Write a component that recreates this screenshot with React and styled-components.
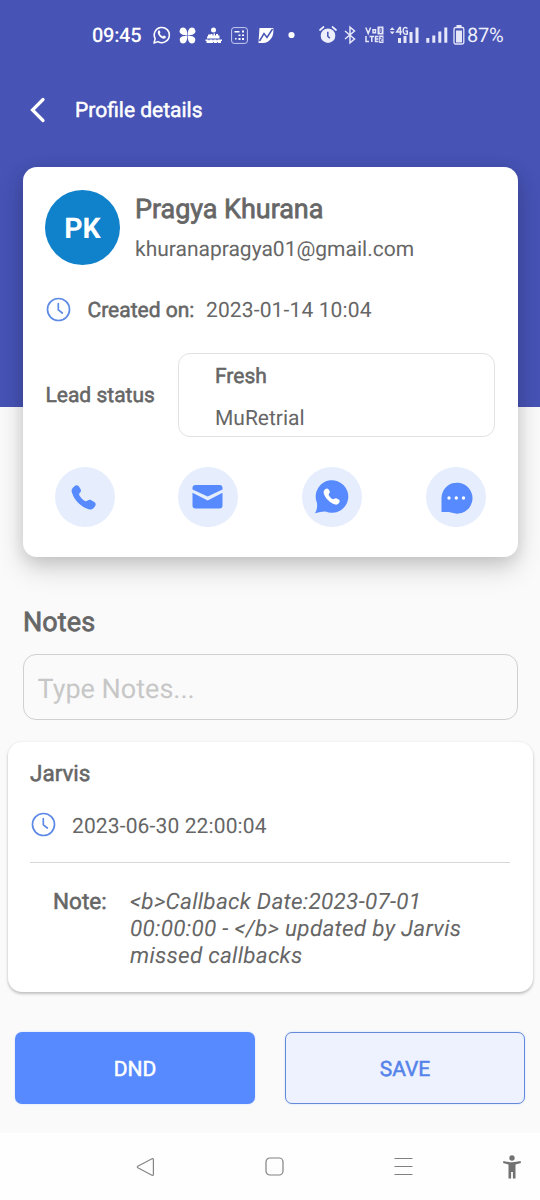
import React from 'react';
import styled, { createGlobalStyle } from 'styled-components';

const GlobalStyle = createGlobalStyle`
  * { box-sizing: border-box; }
  body {
    margin: 0;
    background: #fafafa;
    font-family: Roboto, sans-serif;
    text-rendering: geometricPrecision;
  }
`;

const Screen = styled.div`
  width: 540px;
  height: 1200px;
  display: flex;
  flex-direction: column;
  overflow: hidden;
  color: #666;
  background: linear-gradient(#4753b5 407px, #fafafa 407px);
`;

const StatusBar = styled.div`
  height: 70px;
  padding-left: 92px;
  display: flex;
  align-items: center;
  color: #fff;
  white-space: nowrap;
`;

const StatusText = styled.span`
  width: ${(p) => p.$width}px;
  margin-left: ${(p) => p.$gap || 0}px;
  font-size: 20px;
  line-height: 24px;
  font-weight: ${(p) => p.$weight || 400};
  letter-spacing: ${(p) => p.$spacing || 0}px;
  color: ${(p) => p.$color || '#fff'};
`;

const StatusIcon = styled.svg`
  flex: none;
  display: block;
  margin-left: ${(p) => p.$gap}px;
  overflow: visible;
`;

const TitleBar = styled.header`
  height: 80px;
  margin-bottom: 17px;
  padding-left: 29px;
  display: flex;
  align-items: center;
  gap: 28px;
`;

const Title = styled.h1`
  margin: 0;
  padding-top: 1px;
  font-size: 21px;
  line-height: 26px;
  font-weight: 400;
  color: #fff;
  -webkit-text-stroke: 0.5px #fff;
`;

const ProfileCard = styled.section`
  flex: none;
  width: 495px;
  height: 390px;
  margin-left: 22.5px;
  padding: 23px 23px 0 22px;
  border-radius: 14px;
  background: #fff;
  box-shadow: 0 12px 26px rgba(0, 0, 0, 0.17), 0 3px 16px rgba(0, 0, 0, 0.1);
`;

const Person = styled.div`
  display: flex;
  height: 75px;
  gap: 15.5px;
`;

const Avatar = styled.div`
  width: 75px;
  height: 75px;
  border-radius: 50%;
  background: #1081cb;
  color: #fff;
  font-size: 28.5px;
  font-weight: 700;
  display: flex;
  align-items: center;
  justify-content: center;
  padding: 2px 0 0 1px;
`;

const Name = styled.h2`
  margin: 3px 0 12px;
  font-size: 27px;
  line-height: 32px;
  letter-spacing: -0.05px;
  font-weight: 400;
  -webkit-text-stroke: 0.75px #666;
`;

const Email = styled.div`
  font-size: 21px;
  line-height: 27px;
`;

const Label = styled.span`
  font-size: ${(p) => p.$size || 21}px;
  line-height: 26px;
  -webkit-text-stroke: 0.55px #666;
`;

const Value = styled.span`
  font-size: 21px;
  line-height: 26px;
  letter-spacing: ${(p) => p.$spacing || 0}px;
`;

const CreatedRow = styled.div`
  display: flex;
  align-items: center;
  height: 26px;
  margin-top: 32px;
  padding-left: 1px;

  ${Label} { margin-left: 17px; width: 118.5px; }
  ${Label}, ${Value} { padding-top: 2px; }
`;

const StatusRow = styled.div`
  display: flex;
  align-items: center;
  justify-content: space-between;
  margin-top: 30px;
  padding-left: 1px;

  > ${Label} { padding-top: 2px; }
`;

const StatusPicker = styled.div`
  width: 317px;
  height: 84px;
  padding: 10px 36.5px;
  border: 1.5px solid #e2e2e2;
  border-radius: 12px;
  display: flex;
  flex-direction: column;
  gap: 15.5px;
`;

const Actions = styled.div`
  display: flex;
  justify-content: space-between;
  margin: 30px 8.5px 0 10px;
`;

const ActionButton = styled.button`
  width: 60px;
  height: 60px;
  padding: 0;
  border: 0;
  border-radius: 50%;
  background: #e6edfd;
  svg { display: block; }
`;

const NotesHeading = styled.h2`
  margin: 49px 0 0 23px;
  font-size: 27px;
  line-height: 32px;
  letter-spacing: 0.1px;
  font-weight: 400;
  -webkit-text-stroke: 0.75px #666;
`;

const NotesInput = styled.input`
  flex: none;
  width: 495px;
  height: 66px;
  margin: 16px 0 22px 22.5px;
  padding: 3px 14px 0;
  border: 1.5px solid #d0d0d0;
  border-radius: 13px;
  background: transparent;
  font: 27px Roboto, sans-serif;
  text-rendering: inherit;
  &::placeholder { color: #c7c7c7; opacity: 1; }
`;

const NoteCard = styled.article`
  flex: none;
  width: 525px;
  height: 250px;
  margin-left: 7.5px;
  padding: 19px 22.5px 0;
  border-radius: 14px;
  background: #fff;
  box-shadow: 0 2px 3px rgba(0, 0, 0, 0.22), 0 0 3px rgba(0, 0, 0, 0.07);
`;

const Author = styled.div`
  height: 26px;
  display: flex;
`;

const NoteDate = styled.div`
  display: flex;
  align-items: center;
  gap: 16px;
  padding-left: 1px;
  height: 26px;
  margin-top: 25px;

  ${Value} { padding-top: 3px; }
`;

const Divider = styled.hr`
  height: 1px;
  margin: 24px 0 26px;
  border: 0;
  background: #d8d8d8;
`;

const NoteBody = styled.div`
  display: flex;
  padding-left: 23px;
  ${Label} { width: 77px; flex: none; }
`;

const NoteText = styled.p`
  margin: 0;
  width: 350px;
  font-size: 22.5px;
  line-height: 26.8px;
  letter-spacing: 0.27px;
  font-style: italic;
`;

const Buttons = styled.div`
  display: flex;
  gap: 30px;
  padding: 0 15px;
  margin-top: 40px;
`;

const Button = styled.button`
  width: 240px;
  height: 72px;
  padding: 3px 0 0;
  border-radius: 7px;
  border: ${(p) => (p.$outlined ? '1.5px solid #638ada' : '0')};
  background: ${(p) => (p.$outlined ? '#edf2fe' : '#568afe')};
  color: ${(p) => (p.$outlined ? '#5583ea' : '#fff')};
  font: 21px Roboto, sans-serif;
  text-rendering: inherit;
  -webkit-text-stroke: 0.5px currentColor;
  box-shadow: 0 0 2px rgba(86, 138, 254, 0.3);
`;

const NavBar = styled.nav`
  height: 67px;
  margin-top: auto;
  padding: 0 18px 0 136px;
  background: #fefefe;
  display: flex;
  align-items: center;
  svg { display: block; }
`;

const NavIcon = styled.svg`
  margin-left: ${(p) => p.$gap || 0}px;
`;

const Clock = () => (
  <svg width="25" height="26" viewBox="0 0 25 26" fill="none" stroke="#5e8ae6" strokeWidth="1.7" strokeLinecap="round" strokeLinejoin="round">
    <circle cx="12.5" cy="12.500" r="11" />
    <path d="M12.3 6.500v6.300l4 3.200" />
  </svg>
);

const handset = 'M5 3.200C6.300 1.900 8.300 1.900 9.400 3.300L11.200 6.200C12 7.600 11.600 8.600 10.800 9.500L10.200 10.200C9.500 11 9.700 11.900 10.200 12.800C11.500 15 13.400 17 15.600 18.200C16.600 18.700 17.400 18.300 18.300 17.700C19.700 16.800 20.800 16.700 22 17.300L25 19.100C26.700 20.200 26.800 21.800 25.800 23.500C24.300 26 22.300 27.300 19.500 26.600C11.500 24.300 4.300 17 2.300 9.200C1.500 6.500 3.200 4.600 5 3.200Z';

export default function App() {
  return (
    <Screen>
      <GlobalStyle />
      <StatusBar>
        <StatusText $width={50} $weight={500} $spacing={-0.3}>09:45</StatusText>
        <StatusIcon $gap={11} width="17" height="18" viewBox="0 0 17 18" fill="none" stroke="#fff">
          <path d="M1 17l1.2-4.2A7.6 7.6 0 1 1 5 15.6Z" strokeWidth="1.5" strokeLinejoin="round" />
          <path d="M5.1 5c.7-1 1.4-.8 1.8.1l.5 1.2c.2.5-.7 1-.6 1.3.6 1.3 1.5 2.2 2.9 2.8.4.1.9-1 1.4-.8l1.3.6c1 .5.4 2-.9 2.4-3.3.7-8.2-4.7-6.4-7.6Z" fill="#fff" stroke="none" />
        </StatusIcon>
        <StatusIcon $gap={9} width="17" height="17" viewBox="0 0 17 17" fill="#fff">
          <path d="M8.200 8.200Q3 8.500 1 6 0 3.500 1.500 1.500 3.500 0 6 1 8.500 3 8.200 8.200ZM8.800 8.200Q8.500 3 11 1 13.500 0 15.500 1.500 17 3.500 16 6 14 8.500 8.800 8.200ZM8.200 8.800Q3 8.500 1 11 0 13.500 1.500 15.500 3.500 17 6 16 8.500 14 8.200 8.800ZM8.800 8.800Q8.500 14 11 16 13.500 17 15.500 15.500 17 13.500 16 11 14 8.500 8.800 8.800Z" />
        </StatusIcon>
        <StatusIcon $gap={9} width="18" height="17" viewBox="0 0 18 17" fill="#fff">
          <circle cx="8.500" cy="3" r="2.500" />
          <path d="M3 8q1-1.500 2.500 0V7h2v1.500h1V6.500h1.500v2h1V7h2v1.500q1-.5 1.500.5v2.500H2V9.500h1Z" />
          <path d="M.5 12.500h3v.8h1v-.8h3v.8h1v-.8h3v.8h1v-.8h4.500v1.500h-1v2h-3v-.8h-1v.8H9v-.8H8v.8H1.500v-2h-1Z" />
        </StatusIcon>
        <StatusIcon $gap={8} width="17" height="17" viewBox="0 0 17 17" fill="#fff">
          <rect x=".6" y=".6" width="15.800" height="15.800" rx="2.500" fill="none" stroke="#c8ccf0" />
          <path d="M3.500 4h5v1.500h-5zM11 3.500h2V5.500h-2zM7.500 7.500h2V9h-2zM11 7.500h2V9h-2zM4 11h1.500v1.500H4zM7.500 11h2v2h-2zM11 11h2v2h-2z" />
        </StatusIcon>
        <StatusIcon $gap={10} width="16" height="17" viewBox="0 0 16 17">
          <path d="M1.500 1h13.800q.5 6-1.500 9.500-3.500 5.500-9 5.500H.5Z" fill="#fff" />
          <path d="M1.500 14 6 6.500l3 4 5.500-8.500" fill="none" stroke="#4753b5" strokeWidth="1.500" />
        </StatusIcon>
        <StatusIcon $gap={14} width="7" height="7" viewBox="0 0 7 7" fill="#fff"><circle cx="3.500" cy="3" r="3.100" /></StatusIcon>
        <StatusIcon $gap={24} width="18" height="18" viewBox="0 0 18 18">
          <circle cx="9" cy="9.700" r="7.300" fill="#eceefb" />
          <path d="M1 4 4.500 1M17 4 13.500 1" stroke="#eceefb" strokeWidth="1.700" strokeLinecap="round" />
          <path d="M8.800 5.800v4.500l2 2" fill="none" stroke="#4753b5" strokeWidth="1.500" />
        </StatusIcon>
        <StatusIcon $gap={7} width="12" height="18" viewBox="0 0 12 18" fill="none" stroke="#e6e8fa" strokeWidth="1.500">
          <path d="m1 5 9.500 8L6 16.800V1.200L10.500 5 1 13" />
        </StatusIcon>
        <StatusIcon $gap={9} width="20" height="18" viewBox="0 0 20 18" fill="none" stroke="#e6e8fa" strokeWidth="1.500">
          <path d="m.8 1.500 2.400 6 2.400-6M8 3.700h2.500v3H8ZM1 10v5.500h3M4.500 10.500h4.500M6.800 10.500V16M13.500 10.500h-3V15.500h3M10.500 13h3" />
          <path d="M12.500.5h6v8h-6zM14.200 9.500h4.300v7.500h-4.300z" fill="#e6e8fa" stroke="none" />
          <path d="M15 2.300v4.200h1.300v-4.200ZM15.500 11.500h1.600v1.700h-1.600v2h2" stroke="#4753b5" strokeWidth=".9" />
        </StatusIcon>
        <StatusIcon $gap={4} width="31" height="18" viewBox="0 0 31 18" fill="#e6e8fa">
          <path d="m.7 4 2.500-2.700 2.500 2.700ZM.7 5.500h5L3.200 8.200ZM9 12h3v5H9zM14.500 10h3v7h-3zM20.500 6h3v11h-3zM26.500 1.500h3v15.500h-3z" />
          <path d="M11 .8 7.700 6h5.200M11.400.8v8.200M18.500 2.500Q14.600-.2 14.100 4.500 14.400 9.300 18.300 8V5H16.500" fill="none" stroke="#e6e8fa" strokeWidth="1.500" />
        </StatusIcon>
        <StatusIcon $gap={6} width="22" height="16" viewBox="0 0 22 16" fill="#e6e8fa">
          <path d="M.3 11h3v4.800h-3zM6.300 8.500h3v7.300h-3zM12.300 4.500h3v11.300h-3zM18.300.5h3v15.300h-3z" />
        </StatusIcon>
        <StatusIcon $gap={5} width="12" height="20" viewBox="0 0 12 20" fill="#e6e8fa">
          <rect x="1" y="2.500" width="9.800" height="16.500" rx="1.500" fill="none" stroke="#e6e8fa" strokeWidth="1.300" />
          <path d="M3.500 0h5v2h-5zM3 5.500h6v12H3z" />
        </StatusIcon>
        <StatusText $gap={2} $width={40} $spacing={-0.3} $color="#eceefb">87%</StatusText>
      </StatusBar>

      <TitleBar>
        <svg width="18" height="26" viewBox="0 0 18 26" fill="none" stroke="#fff" strokeWidth="3.200" strokeLinecap="round">
          <path d="M14 2.500 3.500 13 14 23.500" />
        </svg>
        <Title>Profile details</Title>
      </TitleBar>

      <ProfileCard>
        <Person>
          <Avatar>PK</Avatar>
          <div>
            <Name>Pragya Khurana</Name>
            <Email>khuranapragya01@gmail.com</Email>
          </div>
        </Person>
        <CreatedRow>
          <Clock />
          <Label>Created on:</Label>
          <Value $spacing={0.13}>2023-01-14 10:04</Value>
        </CreatedRow>
        <StatusRow>
          <Label>Lead status</Label>
          <StatusPicker>
            <Label>Fresh</Label>
            <Value>MuRetrial</Value>
          </StatusPicker>
        </StatusRow>
        <Actions>
          <ActionButton aria-label="Call">
            <svg width="60" height="60" viewBox="0 0 60 60" fill="#568afe"><path d={handset} transform="translate(14.500 16) scale(.99)" /></svg>
          </ActionButton>
          <ActionButton aria-label="Email">
            <svg width="60" height="60" viewBox="0 0 60 60" fill="#568afe">
              <path d="M14.500 22.500v-1.500q0-3 3-3h24q3 0 3 3v1.500L29.700 29.500Z" />
              <path d="m14.500 25.800 15.200 7.700 14.800-7.700v12.700q0 3-3 3h-24q-3 0-3-3Z" />
            </svg>
          </ActionButton>
          <ActionButton aria-label="WhatsApp">
            <svg width="60" height="60" viewBox="0 0 60 60">
              <path d="M13 46.300Q16 41 14.800 35.500A16.300 16.300 0 1 1 23.500 44.500Q19 44.300 13 46.300Z" fill="#568afe" />
              <path d={handset} fill="#fff" transform="translate(20.200 20) scale(.66)" />
            </svg>
          </ActionButton>
          <ActionButton aria-label="Message">
            <svg width="60" height="60" viewBox="0 0 60 60">
              <path d="M15.500 45V31A15.500 15.500 0 1 1 26 45.800L23 45Z" fill="#568afe" />
              <g fill="#fff"><circle cx="23" cy="31" r="1.700" /><circle cx="30.300" cy="31" r="1.700" /><circle cx="37.500" cy="31" r="1.700" /></g>
            </svg>
          </ActionButton>
        </Actions>
      </ProfileCard>

      <NotesHeading>Notes</NotesHeading>
      <NotesInput placeholder="Type Notes..." />

      <NoteCard>
        <Author><Label $size={22.5}>Jarvis</Label></Author>
        <NoteDate>
          <Clock />
          <Value $spacing={0.13}>2023-06-30 22:00:04</Value>
        </NoteDate>
        <Divider />
        <NoteBody>
          <Label $size={22.5}>Note:</Label>
          <NoteText>{'<b>Callback Date:2023-07-01 00:00:00 - </b> updated by Jarvis missed callbacks'}</NoteText>
        </NoteBody>
      </NoteCard>

      <Buttons>
        <Button>DND</Button>
        <Button $outlined>SAVE</Button>
      </Buttons>

      <NavBar>
        <NavIcon width="19" height="20" viewBox="0 0 19 20" fill="none" stroke="#858585" strokeWidth="1.200" strokeLinejoin="round">
          <path d="M16 1.800 1.800 9.300q-.9.700 0 1.400L16 18.200q1.400.5 1.400-1V2.800q0-1.500-1.400-1Z" />
        </NavIcon>
        <NavIcon $gap={110} width="19" height="19" viewBox="0 0 19 19" fill="none" stroke="#808080" strokeWidth="1.200">
          <rect x="1" y="1" width="17" height="17" rx="4" />
        </NavIcon>
        <NavIcon $gap={110} width="19" height="19" viewBox="0 0 19 19" stroke="#808080" strokeWidth="1.200">
          <path d="M.5 1.500h18M.5 9.500h18M.5 17.500h18" />
        </NavIcon>
        <NavIcon $gap={90} width="18" height="24" viewBox="0 0 18 24" fill="#727272">
          <circle cx="9" cy="3" r="2.700" />
          <path d="M.5 6Q9 8.300 17.500 6l.5 2-5.500 1.500V23.500H9.900V17H8.100v6.500H5.500V9.500L0 8Z" />
        </NavIcon>
      </NavBar>
    </Screen>
  );
}
